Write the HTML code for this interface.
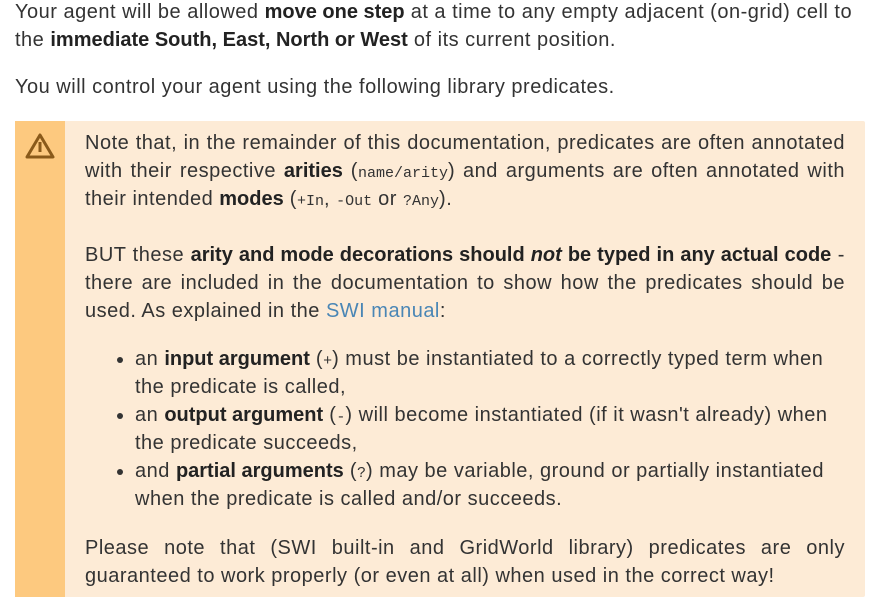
<!DOCTYPE html>
<html><head><meta charset="utf-8"><style>
body{margin:0;width:876px;height:616px;background:#fff;font-family:"Liberation Sans",sans-serif;color:#333;font-size:20px;letter-spacing:0.5px;overflow:hidden}
.l{position:absolute;left:15px;white-space:nowrap;line-height:28px}
b{font-weight:bold;color:#222;letter-spacing:0}
code{font-family:"Liberation Mono",monospace;font-size:15px;letter-spacing:0;line-height:1}
.box{position:absolute;left:15px;top:121px;width:850px;height:476px;background:#fdebd6;border-radius:2px}
.bar{position:absolute;left:0;top:0;width:50px;height:100%;background:#fdc97f}
.txt{position:absolute;left:70px;width:760px;line-height:28px;text-align:justify}
.p{position:absolute;left:0;width:760px}
ul{margin:0;padding-left:50px;text-align:left}
a{color:#4a86b5;text-decoration:none}
</style></head><body>
<div class="l" style="top:-2px">Your agent will be allowed <b>move one step</b> at a time to any empty adjacent (on-grid) cell to</div>
<div class="l" style="top:26px">the <b>immediate South, East, North or West</b> of its current position.</div>
<div class="l" style="top:73px">You will control your agent using the following library predicates.</div>
<div class="box"><div class="bar">
<svg style="position:absolute;left:10px;top:12px" width="30" height="26" viewBox="0 0 30 26"><path d="M15 2 L28 24 L2 24 Z" fill="none" stroke="#8a5a1a" stroke-width="3" stroke-linejoin="round"/><rect x="13.5" y="9" width="3" height="10" fill="#8a5a1a"/></svg></div>
<div class="txt" style="top:8px">
<div class="p" style="top:0">Note that, in the remainder of this documentation, predicates are often annotated with their respective <b>arities</b> (<code>name/arity</code>) and arguments are often annotated with their intended <b>modes</b> (<code>+In</code>, <code>-Out</code> or <code>?Any</code>).</div>
<div class="p" style="top:112px">BUT these <b>arity and mode decorations should <i>not</i> be typed in any actual code</b> - there are included in the documentation to show how the predicates should be used. As explained in the <a>SWI manual</a>:</div>
<div class="p" style="top:216px"><ul>
<li>an <b>input argument</b> (<code>+</code>) must be instantiated to a correctly typed term when the predicate is called,</li>
<li>an <b>output argument</b> (<code>-</code>) will become instantiated (if it wasn't already) when the predicate succeeds,</li>
<li>and <b>partial arguments</b> (<code>?</code>) may be variable, ground or partially instantiated when the predicate is called and/or succeeds.</li></ul></div>
<div class="p" style="top:405px">Please note that (SWI built-in and GridWorld library) predicates are only guaranteed to work properly (or even at all) when used in the correct way!</div>
</div></div>
</body></html>
